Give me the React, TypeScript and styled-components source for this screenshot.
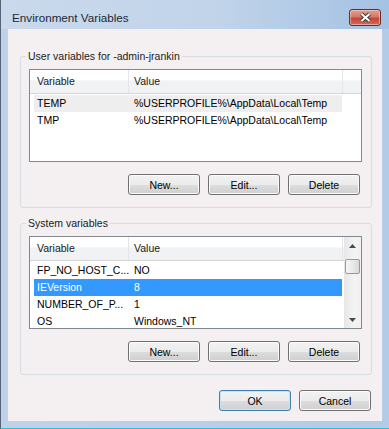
import styled, { createGlobalStyle } from "styled-components";

const GlobalStyle = createGlobalStyle`
  html, body {
    margin: 0;
    padding: 0;
    background: #9ec4e6;
  }
  * {
    box-sizing: border-box;
  }
`;

const Window = styled.div`
  width: 389px;
  height: 429px;
  display: flex;
  flex-direction: column;
  background: linear-gradient(to right, #bfd2e9, #b3cbe6);
  border-left: 1px solid #56647a;
  border-bottom: 1px solid #3ab9d2;
  padding: 0 7px 7px 7px;
  font-family: "Liberation Sans", Arial, sans-serif;
  font-size: 10.5px;
  color: #000;
`;

const TitleBar = styled.div`
  margin: 0 -7px;
  height: 29px;
  flex: none;
  display: flex;
  align-items: flex-start;
  justify-content: space-between;
  padding: 9px 8px 0 11px;
  background: linear-gradient(to right, #cad9ec 0%, #c1d4ea 55%, #a4c2e3 100%);
`;

const Title = styled.div`
  font-size: 11.7px;
  line-height: 17px;
  color: #1b2838;
`;

const CloseButton = styled.div`
  width: 32px;
  height: 17px;
  display: flex;
  align-items: center;
  justify-content: center;
  border: 1px solid #6b2d26;
  border-radius: 3px;
  background: linear-gradient(#e2a090 0%, #d47a68 45%, #c2473a 55%, #cf6d5e 100%);
  box-shadow: inset 0 0 0 1px rgba(255, 220, 210, 0.5);
`;

const Client = styled.div`
  flex: 1;
  display: flex;
  flex-direction: column;
  background: #f4f0f2;
  padding: 27px 10px 10px 12px;
`;

const Group = styled.div`
  display: flex;
  flex-direction: column;
  border: 1px solid #d7dde3;
  border-radius: 3px;
  padding: 0 9px 12px 8px;
  margin-bottom: 15px;
`;

const Caption = styled.div`
  align-self: flex-start;
  margin: -7px 0 0 -3px;
  padding: 0 2px;
  line-height: 13px;
  background: #f4f0f2;
  color: #1a1a1a;
`;

const ListView = styled.div`
  margin-top: 6px;
  height: 93px;
  border: 1px solid #828790;
  background: #fff;
  display: flex;
  overflow: hidden;
`;

const ListBody = styled.div`
  flex: 1;
  display: flex;
  flex-direction: column;
  min-width: 0;
`;

const Header = styled.div`
  height: 24px;
  flex: none;
  display: flex;
  border-bottom: 1px solid #d5d5d5;
  background: linear-gradient(#ffffff 0%, #ffffff 45%, #f1f2f4 46%, #f1f2f4 100%);
`;

const HeaderCell = styled.div<{ $width: number; $pad: number }>`
  width: ${(p) => p.$width}px;
  flex: none;
  padding-left: ${(p) => p.$pad}px;
  line-height: 23px;
  border-right: 1px solid #e2e5ea;
  color: #1a1a1a;
`;

const Rows = styled.div`
  padding: 1px 0 0 4px;
`;

const Row = styled.div<{ $state?: "selected" | "focus" }>`
  width: 308px;
  height: 17px;
  line-height: 17px;
  padding-left: 3px;
  display: grid;
  grid-template-columns: 97px 1fr;
  white-space: nowrap;
  background: ${(p) =>
    p.$state === "selected" ? "#3399ff" : p.$state === "focus" ? "#efeeef" : "transparent"};
  color: ${(p) => (p.$state === "selected" ? "#fff" : "#000")};
`;

const Cell = styled.span`
  overflow: hidden;
`;

const ScrollBar = styled.div`
  width: 17px;
  flex: none;
  display: flex;
  flex-direction: column;
  background: linear-gradient(to right, #e6e6e6, #f4f4f4 60%, #f0f0f0);
`;

const ArrowButton = styled.div`
  height: 17px;
  flex: none;
  display: flex;
  align-items: center;
  justify-content: center;
`;

const Thumb = styled.div`
  margin: 5px 1px 0 1px;
  height: 15px;
  flex: none;
  border: 1px solid #999;
  border-radius: 2px;
  background: linear-gradient(to right, #f6f6f6, #e9e9e9 50%, #d9d9d9);
`;

const Track = styled.div`
  flex: 1;
`;

const ButtonRow = styled.div<{ $pad: number; $top: number }>`
  display: flex;
  justify-content: flex-end;
  gap: 8px;
  margin-top: ${(p) => p.$top}px;
  padding-right: ${(p) => p.$pad}px;
`;

const Button = styled.button<{ $default?: boolean }>`
  width: 72px;
  height: 21px;
  padding: 0;
  border: 1px solid ${(p) => (p.$default ? "#3c7fb1" : "#707070")};
  border-radius: 3px;
  background: linear-gradient(#f2f2f2 0%, #ebebeb 50%, #dddddd 51%, #cfcfcf 100%);
  box-shadow: inset 0 0 0 1px ${(p) => (p.$default ? "#c4e5f6" : "#fbfbfb")};
  font-family: "Liberation Sans", Arial, sans-serif;
  font-size: 10.5px;
  color: #000;
`;

type Variable = { name: string; value: string; state?: "selected" | "focus" };

const userVars: Variable[] = [
  { name: "TEMP", value: "%USERPROFILE%\\AppData\\Local\\Temp", state: "focus" },
  { name: "TMP", value: "%USERPROFILE%\\AppData\\Local\\Temp" },
];

const systemVars: Variable[] = [
  { name: "FP_NO_HOST_C...", value: "NO" },
  { name: "IEVersion", value: "8", state: "selected" },
  { name: "NUMBER_OF_P...", value: "1" },
  { name: "OS", value: "Windows_NT" },
];

const Arrow = ({ up }: { up?: boolean }) => (
  <svg width="7" height="4" viewBox="0 0 7 4">
    <path d={up ? "M0 4 L3.5 0 L7 4 Z" : "M0 0 L7 0 L3.5 4 Z"} fill="#4a4a4a" />
  </svg>
);

const VarList = ({ items, scroll }: { items: Variable[]; scroll?: boolean }) => (
  <ListView>
    <ListBody>
      <Header>
        <HeaderCell $width={99} $pad={7}>Variable</HeaderCell>
        <HeaderCell $width={214} $pad={5}>Value</HeaderCell>
      </Header>
      <Rows>
        {items.map((v) => (
          <Row key={v.name} $state={v.state}>
            <Cell>{v.name}</Cell>
            <Cell>{v.value}</Cell>
          </Row>
        ))}
      </Rows>
    </ListBody>
    {scroll && (
      <ScrollBar>
        <ArrowButton>
          <Arrow up />
        </ArrowButton>
        <Thumb />
        <Track />
        <ArrowButton>
          <Arrow />
        </ArrowButton>
      </ScrollBar>
    )}
  </ListView>
);

const App = () => (
  <>
    <GlobalStyle />
    <Window>
      <TitleBar>
        <Title>Environment Variables</Title>
        <CloseButton>
          <svg width="13" height="11" viewBox="0 0 13 11">
            <path d="M2.5 2 L10.5 9 M10.5 2 L2.5 9" stroke="#3b3b3b" strokeWidth="4" />
            <path d="M2.5 2 L10.5 9 M10.5 2 L2.5 9" stroke="#fff" strokeWidth="2" />
          </svg>
        </CloseButton>
      </TitleBar>
      <Client>
        <Group>
          <Caption>User variables for -admin-jrankin</Caption>
          <VarList items={userVars} />
          <ButtonRow $pad={2} $top={12}>
            <Button>New...</Button>
            <Button>Edit...</Button>
            <Button>Delete</Button>
          </ButtonRow>
        </Group>
        <Group>
          <Caption>System variables</Caption>
          <VarList items={systemVars} scroll />
          <ButtonRow $pad={2} $top={12}>
            <Button>New...</Button>
            <Button>Edit...</Button>
            <Button>Delete</Button>
          </ButtonRow>
        </Group>
        <ButtonRow $pad={1} $top={0}>
          <Button $default>OK</Button>
          <Button>Cancel</Button>
        </ButtonRow>
      </Client>
    </Window>
  </>
);

export default App;
